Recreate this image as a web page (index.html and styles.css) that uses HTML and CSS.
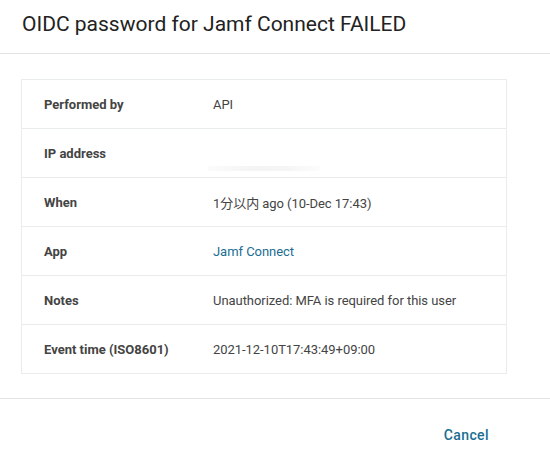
FILE: index.html
```html
<!DOCTYPE html>
<html>
<head>
<meta charset="utf-8">
<link rel="stylesheet" href="styles.css">
</head>
<body>
<div class="dialog">
  <div class="header">
    <h1 class="title">OIDC password for Jamf Connect FAILED</h1>
  </div>
  <div class="content">
    <div class="table">
      <div class="row"><div class="label">Performed by</div><div class="value">API</div></div>
      <div class="row"><div class="label">IP address</div><div class="value"><span class="blur"></span></div></div>
      <div class="row"><div class="label">When</div><div class="value">1分以内 ago (10-Dec 17:43)</div></div>
      <div class="row"><div class="label">App</div><div class="value"><a class="link">Jamf Connect</a></div></div>
      <div class="row"><div class="label">Notes</div><div class="value">Unauthorized: MFA is required for this user</div></div>
      <div class="row"><div class="label">Event time (ISO8601)</div><div class="value">2021-12-10T17:43:49+09:00</div></div>
    </div>
  </div>
  <div class="footer">
    <button class="btn">Cancel</button>
  </div>
</div>
</body>
</html>
```
FILE: styles.css
```css
html, body {
  margin: 0;
  padding: 0;
  background: #fff;
}
body {
  font-family: Roboto, "Noto Sans CJK JP", sans-serif;
  width: 550px;
  height: 466px;
  overflow: hidden;
}
.dialog {
  display: flex;
  flex-direction: column;
  height: 466px;
}
.header {
  height: 54px;
  box-sizing: border-box;
  padding: 10px 22px 0;
  border-bottom: 1px solid #e3e3e3;
}
.title {
  margin: 0;
  font-size: 21px;
  font-weight: 400;
  line-height: 28px;
  color: #222;
}
.content {
  padding: 25px 43px 24px 21px;
  border-bottom: 1px solid #e3e3e3;
}
.table {
  border: 1px solid #e9ecec;
}
.row {
  display: flex;
  align-items: center;
  height: 48px;
  border-top: 1px solid #e9ecec;
  font-size: 13px;
  color: #444;
}
.row:first-child {
  border-top: none;
}
.label {
  width: 169px;
  padding-left: 22px;
  font-weight: 700;
  color: #444;
}
.value {
  flex: 1;
  letter-spacing: -0.05px;
}
.blur {
  display: block;
  width: 112px;
  height: 5px;
  margin: 31px 0 0 -5px;
  background: linear-gradient(90deg, rgba(0,0,0,0.015), rgba(0,0,0,0.045) 40%, rgba(0,0,0,0.04) 70%, rgba(0,0,0,0.01));
}
.link {
  color: #1a6e92;
  text-decoration: none;
}
.footer {
  display: flex;
  justify-content: flex-end;
  padding: 24px 61px 0 0;
}
.btn {
  border: none;
  background: none;
  padding: 0;
  font-family: Roboto, sans-serif;
  font-size: 14px;
  font-weight: 500;
  letter-spacing: 0.4px;
  color: #1a6e92;
  line-height: 24px;
}
```
